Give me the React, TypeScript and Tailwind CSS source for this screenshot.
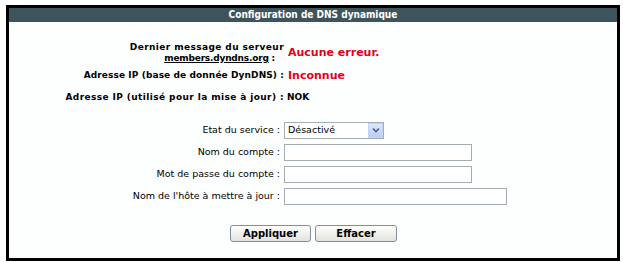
import { useState } from 'react';

const Field = ({ label, width }: { label: string; width: string }) => (
    <div className="flex items-center h-[22px]">
        <span className="w-[275px] text-right pr-[4px]">{label}</span>
        <input
            type="text"
            className={`${width} h-[17px] border border-[#a5acb2] bg-white outline-none px-1 text-[9px]`}
        />
    </div>
);

export default function App() {
    const [service] = useState('Désactivé');

    return (
        <div className="w-[623px] h-[262px] bg-white pt-[5px] pl-[6px] font-['DejaVu_Sans',Verdana,sans-serif] text-black">
            <div className="w-[614px] h-[256px] border-[3px] border-black flex flex-col bg-[#fdfefe]">
                {/* Title bar */}
                <div className="h-[14px] bg-[#3e545c] flex items-center justify-center">
                    <span className="text-white text-[10px] font-bold leading-none font-['DejaVu_Sans_Condensed','DejaVu_Sans',sans-serif]">
                        Configuration de DNS dynamique
                    </span>
                </div>

                {/* Status */}
                <div className="mt-[19px] text-[9px] font-bold">
                    <div className="flex items-center h-[24px]">
                        <div className="w-[275px] text-right leading-[11px]">
                            <div className="tracking-[0.4px]">Dernier message du serveur</div>
                            <div className="pr-[9px] tracking-[-0.2px]"><span className="underline">members.dyndns.org</span> :</div>
                        </div>
                        <span className="pl-[4px] text-[11px] text-[#e3001b]">Aucune erreur.</span>
                    </div>
                    <div className="flex items-center h-[22px]">
                        <span className="w-[275px] text-right tracking-[0.1px]">Adresse IP (base de donnée DynDNS) :</span>
                        <span className="pl-[4px] text-[11px] text-[#e3001b]">Inconnue</span>
                    </div>
                    <div className="flex items-center h-[22px]">
                        <span className="w-[275px] text-right tracking-[0.4px]">Adresse IP (utilisé pour la mise à jour) :</span>
                        <span className="pl-[3px]">NOK</span>
                    </div>
                </div>

                {/* Form */}
                <div className="mt-[10px] text-[9.5px]">
                    <div className="flex items-center h-[22px]">
                        <span className="w-[275px] text-right pr-[4px]">Etat du service :</span>
                        <div className="w-[100px] h-[17px] border border-[#a5acb2] bg-white flex items-center">
                            <span className="flex-1 pl-[3px]">{service}</span>
                            <div className="w-[15px] h-[15px] bg-gradient-to-b from-[#dce7fb] to-[#b9cdf3] border border-[#c3d3fd] flex items-center justify-center">
                                <svg width="8" height="6" viewBox="0 0 8 6">
                                    <path d="M1 1.5 L4 4.5 L7 1.5" fill="none" stroke="#4d6185" strokeWidth="1.6" />
                                </svg>
                            </div>
                        </div>
                    </div>
                    <Field label="Nom du compte :" width="w-[188px]" />
                    <Field label="Mot de passe du compte :" width="w-[188px]" />
                    <Field label="Nom de l'hôte à mettre à jour :" width="w-[223px]" />
                </div>

                {/* Buttons */}
                <div className="mt-[18px] flex justify-center gap-[4px] pl-[1px]">
                    <button className="w-[81px] h-[17px] rounded-[3px] border border-[#7f8fa3] bg-gradient-to-b from-white to-[#e3e3dc] text-[10px] font-bold leading-none">
                        Appliquer
                    </button>
                    <button className="w-[82px] h-[17px] rounded-[3px] border border-[#7f8fa3] bg-gradient-to-b from-white to-[#e3e3dc] text-[10px] font-bold leading-none">
                        Effacer
                    </button>
                </div>
            </div>
        </div>
    );
}
